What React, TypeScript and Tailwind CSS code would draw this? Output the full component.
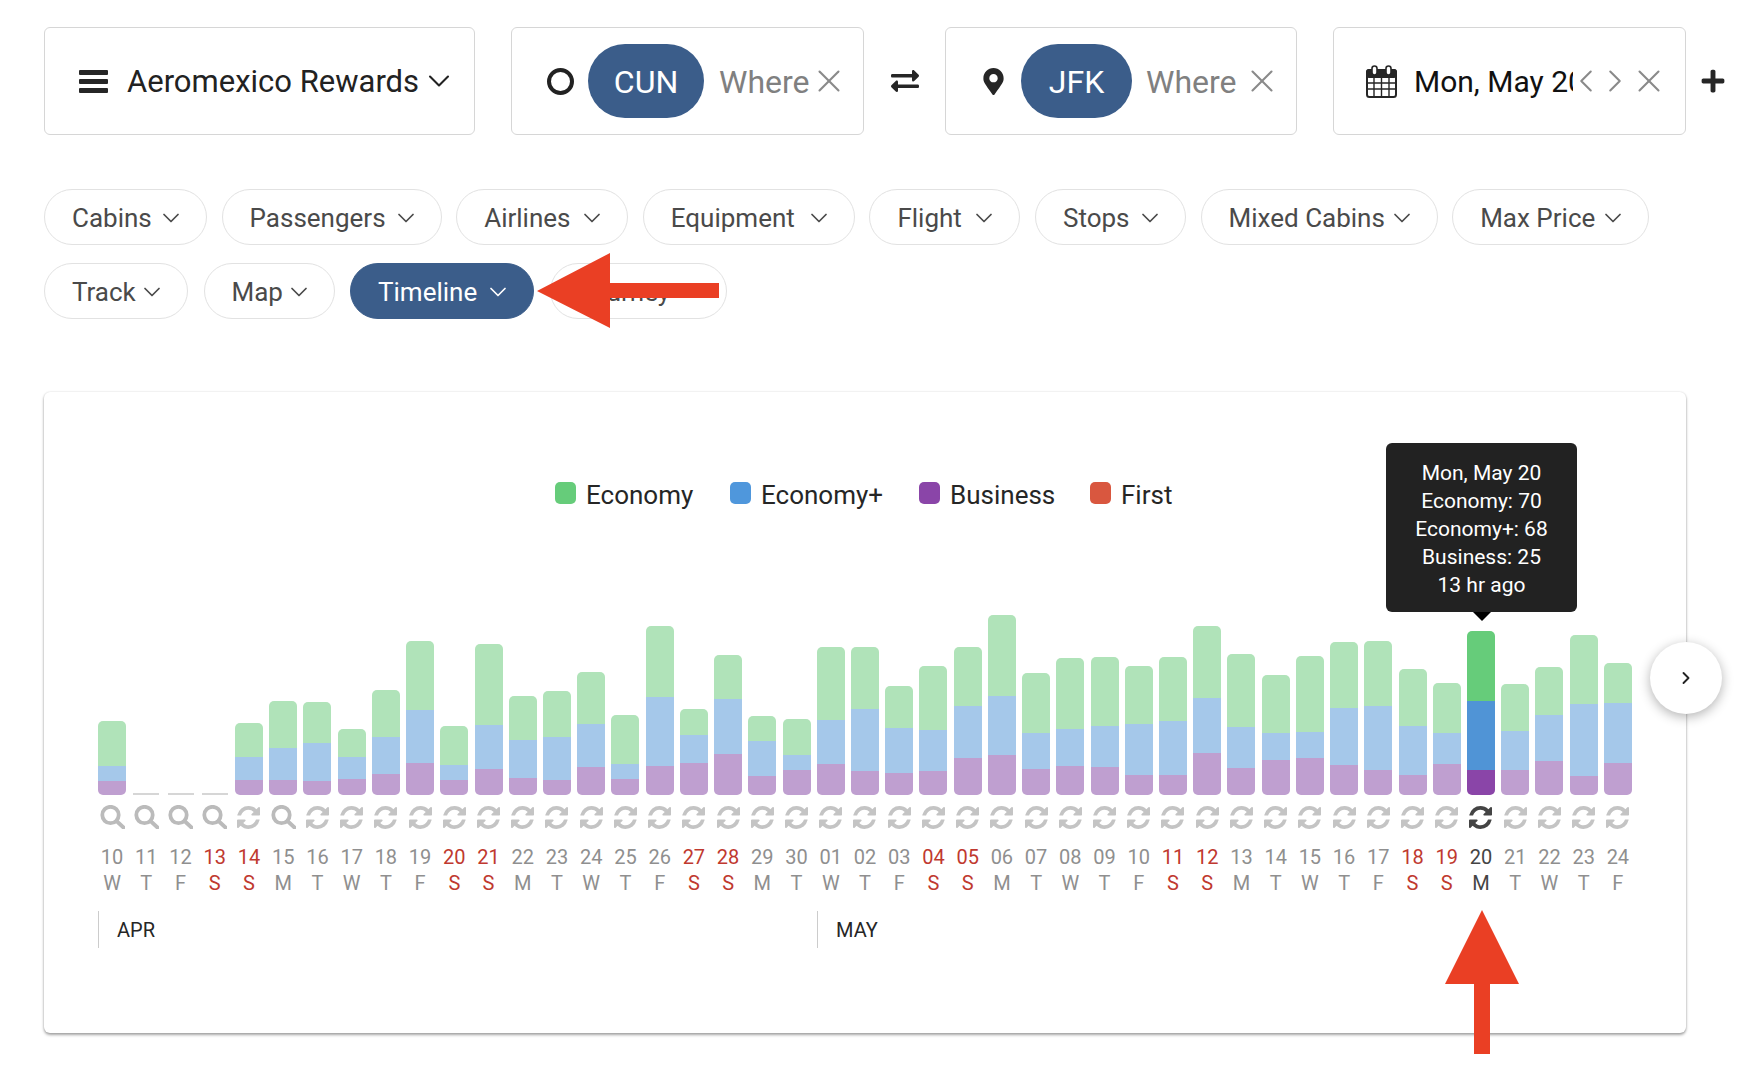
import React from "react";
import { ChevronDown, ChevronLeft, ChevronRight, X } from "lucide-react";
import { FaExchangeAlt, FaMapMarkerAlt, FaPlus } from "react-icons/fa";

// green top, blue top, purple top measured from a baseline of 581 (3x px)
const tops: (number[] | null)[] = [
  [360, 495, 540], null, null, null, [366, 468, 537], [300, 441, 537], [303, 426, 540], [384, 468, 534],
  [267, 408, 519], [120, 327, 486], [375, 492, 537], [129, 372, 504], [285, 417, 531], [270, 408, 537],
  [213, 369, 498], [342, 489, 534], [75, 288, 495], [324, 402, 486], [162, 294, 459], [345, 420, 525],
  [354, 462, 507], [138, 357, 489], [138, 324, 510], [255, 381, 516], [195, 387, 510], [138, 315, 471],
  [42, 285, 462], [216, 396, 504], [171, 384, 495], [168, 375, 498], [195, 369, 522], [168, 360, 522],
  [75, 291, 456], [159, 378, 501], [222, 396, 477], [165, 393, 471], [123, 321, 492], [120, 315, 507],
  [204, 375, 522], [246, 396, 489], [90, 300, 507], [249, 390, 507], [198, 342, 480], [102, 309, 525],
  [186, 306, 486],
];

const weekLetters = ["W", "T", "F", "S", "S", "M", "T"];
const ACTIVE = 40;

const days = tops.map((bar, i) => {
  const num = i < 21 ? i + 10 : i - 20;
  const letter = weekLetters[i % 7];
  return { bar, label: String(num).padStart(2, "0"), letter, search: i < 4 || i === 5 };
});

const row1Chips = [
  { label: "Cabins", width: "w-[163px]" },
  { label: "Passengers", width: "w-[220px]" },
  { label: "Airlines", width: "w-[172px]" },
  { label: "Equipment", width: "w-[212px]" },
  { label: "Flight", width: "w-[151px]" },
  { label: "Stops", width: "w-[151px]" },
  { label: "Mixed Cabins", width: "w-[237px]" },
  { label: "Max Price", width: "w-[197px]" },
];

const legend = [
  { label: "Economy", color: "bg-[#66cc7a]", width: "w-[175px]" },
  { label: "Economy+", color: "bg-[#4f97dc]", width: "w-[189px]" },
  { label: "Business", color: "bg-[#8a45a8]", width: "w-[171px]" },
  { label: "First", color: "bg-[#d9573f]", width: "w-[85px]" },
];

const Chip = ({ label, width, active }: { label: string; width: string; active?: boolean }) => (
  <div
    className={`flex h-[56px] ${width} items-center justify-between rounded-[28px] border px-[27px] text-[26px] ${
      active ? "border-[#3b5d8a] bg-[#3b5d8a] text-white" : "border-[#e2e2e2] bg-white text-[#4a4a4a]"
    }`}
  >
    <span className="pt-[2px]">{label}</span>
    <ChevronDown size={28} strokeWidth={1.5} className="-mx-[6px] mt-[2px] shrink-0" />
  </div>
);

const Where = ({ width }: { width: string }) => (
  <span className={`${width} pt-[2px] text-[32px] text-[#808080]`}>Where</span>
);

const Close = () => <X size={38} strokeWidth={1.3} className="-m-[9px] shrink-0 text-[#8a8a8a]" />;

const Pill = ({ code, width }: { code: string; width: string }) => (
  <div className={`flex h-[74px] ${width} items-center justify-center rounded-[37px] bg-[#3b5d8a] pt-[2px] text-[32px] text-white`}>
    {code}
  </div>
);

const BarsIcon = () => (
  <svg width="29" height="23" viewBox="0 0 29 23" fill="#262626">
    <rect y="0" width="29" height="5" rx="1" />
    <rect y="9" width="29" height="5" rx="1" />
    <rect y="18" width="29" height="5" rx="1" />
  </svg>
);

const SearchIcon = () => (
  <svg width="25" height="24" viewBox="0 0 25 24" fill="none" stroke="#bbbbbb" strokeWidth="3.8">
    <circle cx="10.5" cy="10" r="8.2" />
    <path d="M16.5 16l7 6.5" strokeLinecap="round" />
  </svg>
);

const RefreshIcon = ({ active }: { active: boolean }) => (
  <svg width="23" height="23" viewBox="128 128 1536 1536" fill={active ? "#444444" : "#c4c4c4"}>
    <path d="M1639 1056q0 5-1 7-64 268-268 434.5t-478 166.5q-146 0-282.5-55t-243.5-157l-129 129q-19 19-45 19t-45-19-19-45v-448q0-26 19-45t45-19h448q26 0 45 19t19 45-19 45l-137 137q71 66 161 102t187 36q134 0 250-65t186-179q11-17 53-117 8-23 30-23h192q13 0 22.5 9.5t9.5 22.5zm25-800v448q0 26-19 45t-45 19h-448q-26 0-45-19t-19-45 19-45l138-138q-148-137-349-137-134 0-250 65t-186 179q-11 17-53 117-8 23-30 23h-199q-13 0-22.5-9.5t-9.5-22.5v-7q65-268 270-434.5t480-166.5q146 0 284 55.5t245 156.5l130-129q19-19 45-19t45 19 19 45z" />
  </svg>
);

const CalendarIcon = () => (
  <svg width="31" height="33" viewBox="0 0 31 33" fill="none" stroke="#262626">
    <rect x="1" y="5" width="29" height="27" rx="2.5" strokeWidth="2" />
    <rect x="1" y="5" width="29" height="7" rx="2" fill="#262626" strokeWidth="2" />
    <path d="M1 18h29M1 24h29M8 12v19M15.5 12v19M23 12v19" strokeWidth="1.4" />
    <rect x="6" y="1" width="5" height="9" rx="2.5" fill="#fff" strokeWidth="1.6" />
    <rect x="20" y="1" width="5" height="9" rx="2.5" fill="#fff" strokeWidth="1.6" />
  </svg>
);

const Bar = ({ top, active }: { top: number[]; active: boolean }) => {
  const h = (v: number) => ({ height: `${v / 3}px` });
  return (
    <div className="mx-auto flex w-[28px] flex-col overflow-hidden rounded-[5px]">
      <div className={active ? "bg-[#66cc7a]" : "bg-[#b0e3b9]"} style={h(top[1] - top[0])} />
      <div className={active ? "bg-[#5094d6]" : "bg-[#a5c8ea]"} style={h(top[2] - top[1])} />
      <div className={active ? "bg-[#8a45a8]" : "bg-[#bf9fd0]"} style={h(581 - top[2])} />
    </div>
  );
};

const App = () => {
  const dayColor = (i: number, letter: string) => {
    if (i === ACTIVE) return "text-[#444444]";
    return letter === "S" ? "text-[#c0392f]" : "text-[#8f8f8f]";
  };

  return (
    <div className="relative min-h-screen bg-white pl-[44px] pt-[27px] font-['Roboto',sans-serif] text-[#222222]">
      {/* search row */}
      <div className="flex items-center">
        <div className="flex h-[108px] w-[431px] items-center rounded-md border border-[#d6d6d6] pl-[34px] text-[31px]">
          <BarsIcon />
          <span className="ml-[19px] w-[303px] pt-[2px]">Aeromexico Rewards</span>
          <ChevronDown size={36} strokeWidth={1.4} className="-mx-[9px]" />
        </div>

        <div className="ml-[36px] flex h-[108px] w-[353px] items-center rounded-md border border-[#d6d6d6] pl-[35px]">
          <div className="h-[27px] w-[27px] rounded-full border-[4px] border-[#222222]" />
          <div className="ml-[14px]">
            <Pill code="CUN" width="w-[116px]" />
          </div>
          <div className="ml-[15px] flex items-center">
            <Where width="w-[100px]" />
            <Close />
          </div>
        </div>

        <div className="flex w-[81px] justify-center">
          <FaExchangeAlt className="text-[28px] text-[#262626]" />
        </div>

        <div className="flex h-[108px] w-[352px] items-center rounded-md border border-[#d6d6d6] pl-[34px]">
          <FaMapMarkerAlt className="text-[27px] text-[#262626]" />
          <div className="ml-[14px]">
            <Pill code="JFK" width="w-[111px]" />
          </div>
          <div className="ml-[14px] flex items-center">
            <Where width="w-[106px]" />
            <Close />
          </div>
        </div>

        <div className="ml-[36px] flex h-[108px] w-[353px] items-center rounded-md border border-[#d6d6d6] pl-[32px]">
          <CalendarIcon />
          <div className="ml-[17px] w-[159px] overflow-hidden whitespace-nowrap pt-[1px] text-[30px] text-[#111111]">
            Mon, May 20
          </div>
          <div className="ml-[8px] flex items-center gap-[19px] text-[#8a8a8a]">
            <ChevronLeft size={38} strokeWidth={1.3} className="-mx-[14px]" />
            <ChevronRight size={38} strokeWidth={1.3} className="-mx-[14px]" />
            <Close />
          </div>
        </div>

        <FaPlus className="ml-[14px] text-[26px] text-[#262626]" />
      </div>

      {/* filter chips */}
      <div className="mt-[54px] flex gap-x-[14.6px]">
        {row1Chips.map((chip) => (
          <Chip key={chip.label} label={chip.label} width={chip.width} />
        ))}
      </div>
      <div className="mt-[18px] flex gap-x-[15.5px]">
        <Chip label="Track" width="w-[144px]" />
        <Chip label="Map" width="w-[131px]" />
        <Chip label="Timeline" width="w-[184px]" active />
        <Chip label="Journey" width="w-[177px]" />
      </div>

      {/* timeline card */}
      <div className="relative mt-[73px] h-[641px] w-[1642px] rounded-[6px] bg-white pt-[86px] shadow-[0_2px_3px_rgba(0,0,0,0.35),0_0_2px_rgba(0,0,0,0.15)]">
        <div className="ml-[511px] flex h-[30px] items-center">
          {legend.map((item) => (
            <div key={item.label} className={`flex items-center ${item.width} text-[26px] text-[#262626]`}>
              <span className={`h-[22px] w-[21px] rounded-[5px] ${item.color}`} />
              <span className="ml-[10px] pt-[5px]">{item.label}</span>
            </div>
          ))}
        </div>

        <div className="ml-[51px] mt-[107px] w-[1540px]">
          <div className="grid h-[180px] grid-cols-[repeat(45,minmax(0,1fr))] items-end">
            {days.map((day, i) =>
              day.bar ? (
                <Bar key={i} top={day.bar} active={i === ACTIVE} />
              ) : (
                <div key={i} className="mx-auto h-[2px] w-[26px] bg-[#d6d6d6]" />
              ),
            )}
          </div>

          <div className="mt-[10px] grid h-[24px] grid-cols-[repeat(45,minmax(0,1fr))] items-center">
            {days.map((day, i) => (
              <div key={i} className="flex justify-center">
                {day.search ? <SearchIcon /> : <RefreshIcon active={i === ACTIVE} />}
              </div>
            ))}
          </div>

          <div className="mt-[15px] grid grid-cols-[repeat(45,minmax(0,1fr))] text-center text-[20px] leading-[26px]">
            {days.map((day, i) => (
              <div key={i} className={dayColor(i, day.letter)}>
                <div>{day.label}</div>
                <div>{day.letter}</div>
              </div>
            ))}
          </div>

          <div className="mt-[15px] flex h-[37px] items-center text-[20px] text-[#262626]">
            <div className="ml-[3px] flex h-full w-[719px] items-center border-l border-[#cccccc] pl-[18px]">APR</div>
            <div className="flex h-full items-center border-l border-[#cccccc] pl-[18px]">MAY</div>
          </div>
        </div>

        {/* tooltip over May 20 */}
        <div className="absolute left-[1342px] top-[51px] flex h-[169px] w-[191px] flex-col items-center justify-center rounded-[6px] bg-[#222222] pt-[3px] text-[21px] leading-[28px] text-white">
          <div>Mon, May 20</div>
          <div>Economy: 70</div>
          <div>Economy+: 68</div>
          <div>Business: 25</div>
          <div>13 hr ago</div>
          <div className="absolute left-1/2 top-full -ml-[9px] h-0 w-0 border-x-[9px] border-t-[9px] border-x-transparent border-t-black" />
        </div>

        {/* next page */}
        <div className="absolute left-[1606px] top-[250px] flex h-[72px] w-[72px] items-center justify-center rounded-full bg-white text-[#222222] shadow-[0_3px_12px_rgba(0,0,0,0.3)]">
          <ChevronRight size={20} strokeWidth={2.25} />
        </div>
      </div>

      {/* annotation arrows */}
      <svg className="absolute left-[537px] top-[253px]" width="182" height="75" viewBox="0 0 182 75">
        <polygon points="0,38 73,0 73,30 182,30 182,45 73,45 73,75" fill="#ea3f24" />
      </svg>
      <svg className="absolute left-[1445px] top-[910px]" width="74" height="144" viewBox="0 0 74 144">
        <polygon points="37,0 74,74 45,74 45,144 29,144 29,74 0,74" fill="#ea3f24" />
      </svg>
    </div>
  );
};

export default App;
